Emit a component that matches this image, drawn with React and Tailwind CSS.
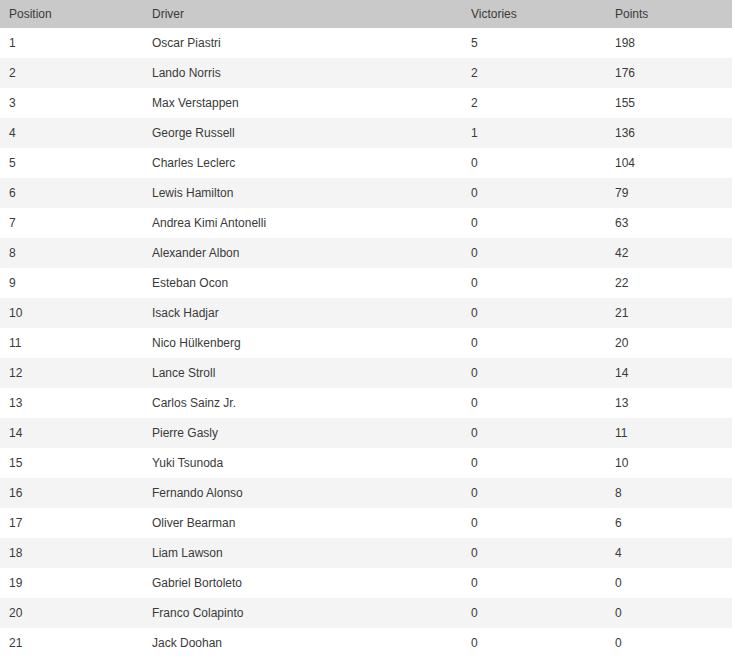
const drivers = [
  ['Oscar Piastri', 5, 198],
  ['Lando Norris', 2, 176],
  ['Max Verstappen', 2, 155],
  ['George Russell', 1, 136],
  ['Charles Leclerc', 0, 104],
  ['Lewis Hamilton', 0, 79],
  ['Andrea Kimi Antonelli', 0, 63],
  ['Alexander Albon', 0, 42],
  ['Esteban Ocon', 0, 22],
  ['Isack Hadjar', 0, 21],
  ['Nico Hülkenberg', 0, 20],
  ['Lance Stroll', 0, 14],
  ['Carlos Sainz Jr.', 0, 13],
  ['Pierre Gasly', 0, 11],
  ['Yuki Tsunoda', 0, 10],
  ['Fernando Alonso', 0, 8],
  ['Oliver Bearman', 0, 6],
  ['Liam Lawson', 0, 4],
  ['Gabriel Bortoleto', 0, 0],
  ['Franco Colapinto', 0, 0],
  ['Jack Doohan', 0, 0],
];

export default function App() {
  return (
    <div className="bg-white min-h-screen font-['Liberation_Sans',Arial,sans-serif] text-[12px] text-[#3a3a3a]">
      <table className="w-[732px] border-collapse table-fixed">
        <colgroup>
          <col className="w-[143px]" />
          <col className="w-[319px]" />
          <col className="w-[144px]" />
          <col className="w-[126px]" />
        </colgroup>
        <thead>
          <tr className="bg-[#c9c9c9] h-[28px]">
            <th className="text-left font-normal px-[9px]">Position</th>
            <th className="text-left font-normal px-[9px]">Driver</th>
            <th className="text-left font-normal px-[9px]">Victories</th>
            <th className="text-left font-normal px-[9px]">Points</th>
          </tr>
        </thead>
        <tbody>
          {drivers.map((d, i) => (
            <tr key={i} className={i % 2 === 1 ? 'bg-[#f4f4f4] h-[30px]' : 'bg-white h-[30px]'}>
              <td className="px-[9px]">{i + 1}</td>
              <td className="px-[9px]">{d[0]}</td>
              <td className="px-[9px]">{d[1]}</td>
              <td className="px-[9px]">{d[2]}</td>
            </tr>
          ))}
        </tbody>
      </table>
    </div>
  );
}
